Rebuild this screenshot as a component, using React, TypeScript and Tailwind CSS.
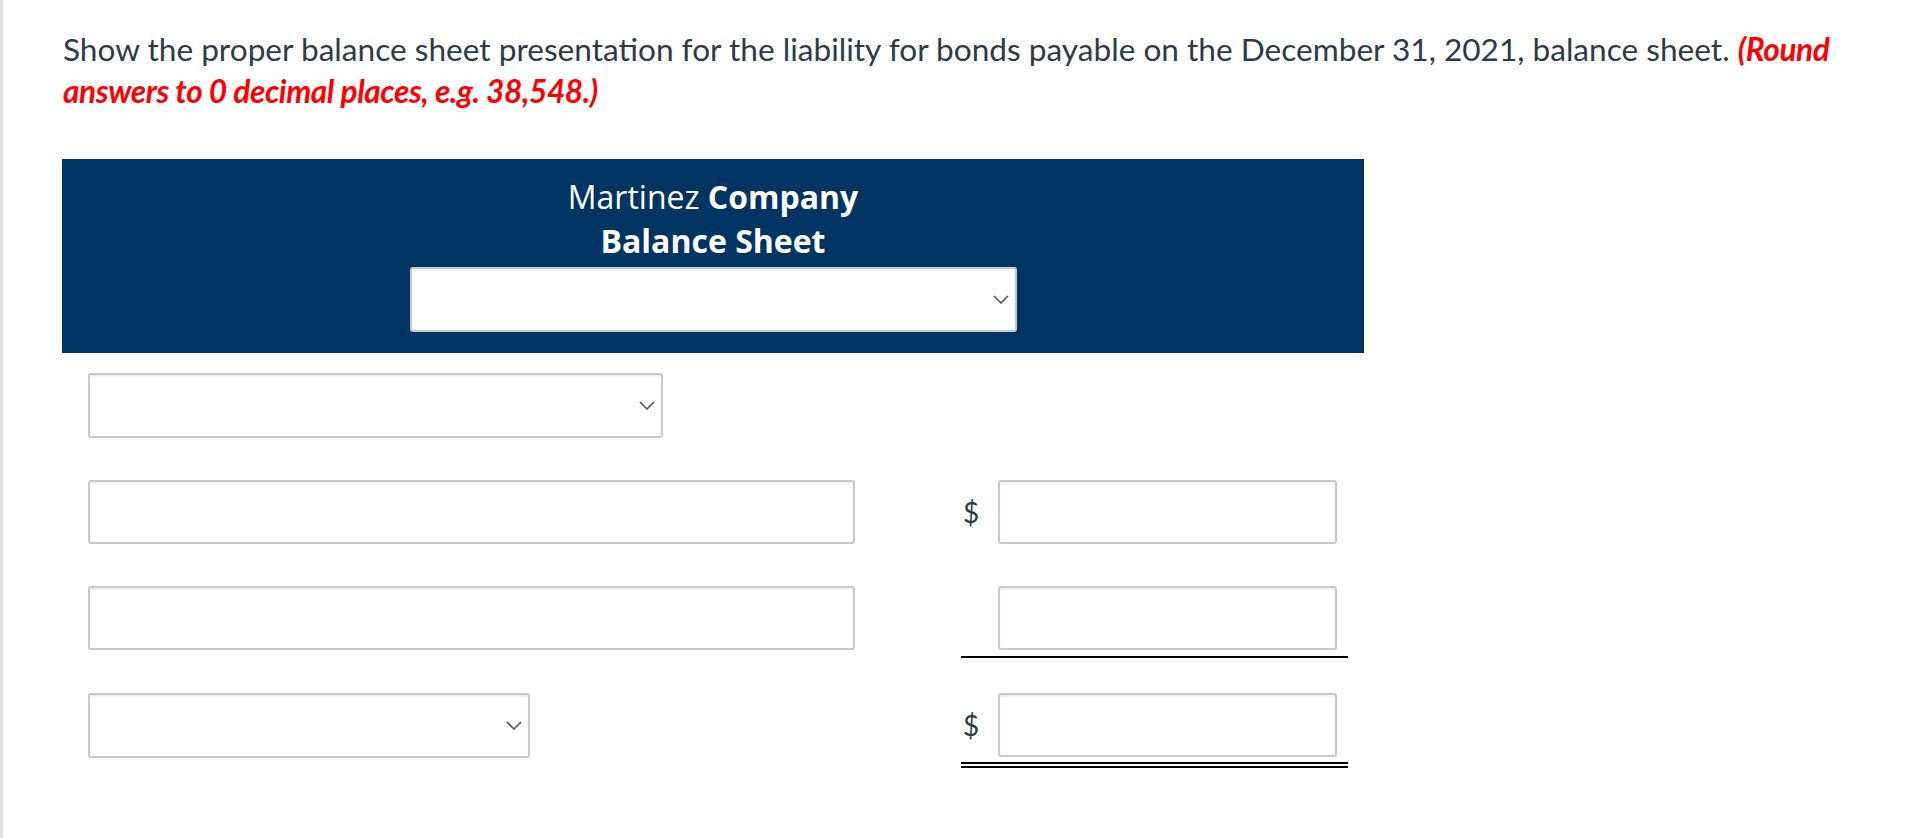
import React from "react";

function Chevron() {
  return (
    <svg width="16" height="9" viewBox="0 0 16 9" className="shrink-0">
      <polyline points="1,1 8,8 15,1" fill="none" stroke="#555" strokeWidth="1.6" />
    </svg>
  );
}

function SelectBox({ width }: { width: string }) {
  return (
    <div
      className={`${width} h-[65px] bg-white border-2 border-[#c9c9c9] rounded-[3px] shadow-[inset_0_2px_2px_rgba(0,0,0,0.06)] flex items-center justify-end pr-[6px]`}
    >
      <Chevron />
    </div>
  );
}

function InputBox({ width }: { width: string }) {
  return (
    <div
      className={`${width} h-[64px] bg-white border-2 border-[#c9c9c9] rounded-[3px] shadow-[inset_0_2px_2px_rgba(0,0,0,0.06)]`}
    />
  );
}

export default function App() {
  return (
    <div
      className="min-h-screen w-full bg-white flex text-[#2d3b45]"
      style={{ fontFamily: "Lato, 'Open Sans', sans-serif" }}
    >
      <div className="w-[3px] shrink-0 bg-[#e2e2e2]" />
      <div className="flex-1 pt-[28px]">
        {/* question text */}
        <p className="ml-[60px] text-[31.6px] leading-[42px] pr-[40px]">
          Show the proper balance sheet presentation for the liability for bonds payable on the December 31, 2021, balance sheet.{" "}
          <span className="text-[#ff0000] font-bold italic tracking-[-0.4px]">
            (Round answers to 0 decimal places, e.g. 38,548.)
          </span>
        </p>

        <div className="ml-[59px] w-[1302px] mt-[47px]">
          {/* statement header */}
          <div
            className="bg-[#003462] pt-[16px] pb-[21px] flex flex-col items-center text-white text-[32px] leading-[44px]"
            style={{ fontFamily: "'Open Sans', 'Noto Sans', sans-serif" }}
          >
            <div>
              Martinez <span className="font-bold">Company</span>
            </div>
            <div className="font-bold">Balance Sheet</div>
            <div className="mt-[4px]">
              <SelectBox width="w-[607px]" />
            </div>
          </div>

          {/* rows */}
          <div className="pl-[26px]">
            <div className="mt-[20px] flex">
              <SelectBox width="w-[575px]" />
            </div>

            <div className="mt-[42px] flex items-start">
              <div className="w-[873px] shrink-0">
                <InputBox width="w-[767px]" />
              </div>
              <div className="w-[387px] flex items-center pl-[2px]">
                <span className="w-[35px] text-[28px] leading-[64px]">$</span>
                <InputBox width="w-[339px]" />
              </div>
            </div>

            <div className="mt-[42px] flex items-start">
              <div className="w-[873px] shrink-0">
                <InputBox width="w-[767px]" />
              </div>
              <div className="w-[387px] flex items-center pl-[37px] pb-[6px] border-b-2 border-black">
                <InputBox width="w-[339px]" />
              </div>
            </div>

            <div className="mt-[35px] flex items-start">
              <div className="w-[873px] shrink-0">
                <SelectBox width="w-[442px]" />
              </div>
              <div className="w-[387px] flex items-center pl-[2px] pb-[5px] border-b-[6px] border-double border-black">
                <span className="w-[35px] text-[28px] leading-[64px]">$</span>
                <InputBox width="w-[339px]" />
              </div>
            </div>
          </div>
        </div>
      </div>
    </div>
  );
}
